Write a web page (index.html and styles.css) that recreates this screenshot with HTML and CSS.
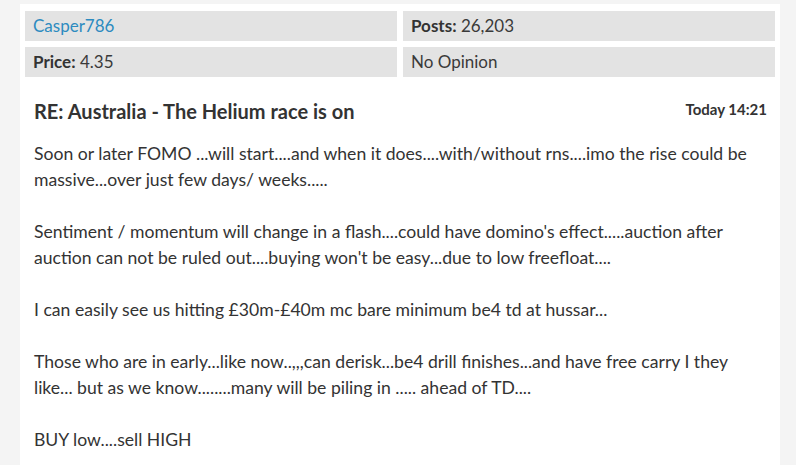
FILE: index.html
```html
<!DOCTYPE html>
<html>
<head>
<meta charset="utf-8">
<link rel="stylesheet" href="styles.css">
</head>
<body>
<div class="panel">
  <div class="meta">
    <div class="cell"><a class="user" href="#">Casper786</a></div>
    <div class="cell"><b>Posts:</b> 26,203</div>
    <div class="cell"><b>Price:</b> 4.35</div>
    <div class="cell">No Opinion</div>
  </div>
  <div class="head">
    <h1 class="title">RE: Australia - The Helium race is on</h1>
    <span class="time">Today 14:21</span>
  </div>
  <div class="body">
    <p>Soon or later FOMO ...will start....and when it does....with/without rns....imo the rise could be massive...over just few days/ weeks.....</p>
    <p>Sentiment / momentum will change in a flash....could have domino's effect.....auction after auction can not be ruled out....buying won't be easy...due to low freefloat....</p>
    <p>I can easily see us hitting £30m-£40m mc bare minimum be4 td at hussar...</p>
    <p>Those who are in early...like now..,,,can derisk...be4 drill finishes...and have free carry I they like... but as we know........many will be piling in ..... ahead of TD....</p>
    <p>BUY low....sell HIGH</p>
  </div>
</div>
</body>
</html>
```
FILE: styles.css
```css
html, body {
  margin: 0;
  padding: 0;
  background: #f4f4f4;
}
body {
  padding-top: 4px;
  font-family: "Lato", "Open Sans", sans-serif;
  color: #333;
}
.panel {
  margin-left: 20px;
  width: 750px;
  background: #fff;
  padding: 7px 5px 20px;
}
.meta {
  display: grid;
  grid-template-columns: 372px 372px;
  column-gap: 6px;
  row-gap: 6px;
}
.cell {
  background: #e3e3e3;
  height: 30px;
  line-height: 29px;
  padding-left: 8px;
  font-size: 17px;
  color: #3a3a3a;
}
.cell b { font-weight: 700; color: #333; }
.user {
  color: #2d8bc0;
  text-decoration: none;
}
.head {
  display: flex;
  justify-content: space-between;
  align-items: center;
  padding: 22px 8px 0 9px;
}
.title {
  margin: 0;
  font-size: 20px;
  font-weight: 700;
  color: #333;
}
.time {
  font-size: 15px;
  font-weight: 700;
  color: #333;
  padding-bottom: 4px;
}
.body {
  padding: 18px 9px 0;
  font-size: 17.6px;
  line-height: 26px;
  color: #333;
}
.body p {
  margin: 0 0 26px;
}
```
